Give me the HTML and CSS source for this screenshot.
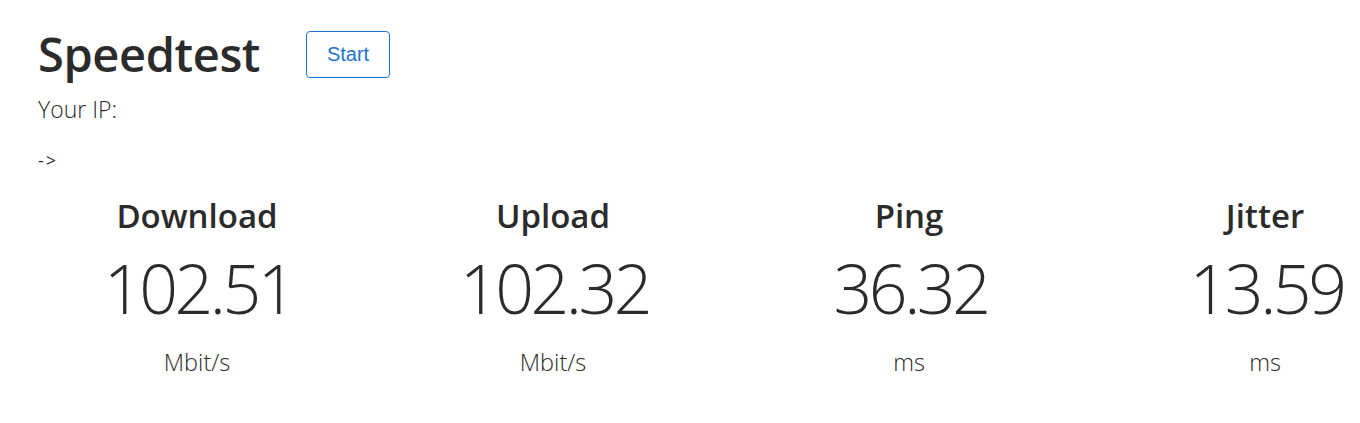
FILE: index.html
```html
<!DOCTYPE html>
<html>
<head>
<meta charset="utf-8">
<link rel="stylesheet" href="styles.css">
</head>
<body>
<div class="page">
  <div class="header">
    <h1 class="title">Speedtest</h1>
    <button class="start-btn">Start</button>
  </div>
  <div class="ip">Your IP: <span class="ip-val"></span></div>
  <div class="arrow">-&gt;</div>
  <div class="results">
    <div class="metric">
      <div class="metric-name">Download</div>
      <div class="metric-value">102.51</div>
      <div class="metric-unit">Mbit/s</div>
    </div>
    <div class="metric">
      <div class="metric-name">Upload</div>
      <div class="metric-value">102.32</div>
      <div class="metric-unit">Mbit/s</div>
    </div>
    <div class="metric">
      <div class="metric-name">Ping</div>
      <div class="metric-value">36.32</div>
      <div class="metric-unit">ms</div>
    </div>
    <div class="metric">
      <div class="metric-name">Jitter</div>
      <div class="metric-value">13.59</div>
      <div class="metric-unit">ms</div>
    </div>
  </div>
</div>
</body>
</html>
```

FILE: styles.css
```css
html, body {
  margin: 0;
  padding: 0;
  background: #fff;
  overflow: hidden;
}
body {
  font-family: "Open Sans", "Noto Sans", sans-serif;
  color: #2b2b2b;
}
.page {
  padding: 0 0 0 38px;
  overflow: hidden;
}
.header {
  display: flex;
  align-items: flex-start;
  padding-top: 31px;
}
.title {
  margin: -7px 0 0 0;
  font-size: 47px;
  font-weight: 600;
  line-height: 60px;
  letter-spacing: -0.4px;
}
.start-btn {
  margin-left: 46px;
  width: 84px;
  height: 47px;
  background: #fff;
  border: 1px solid #1c74d4;
  border-radius: 4px;
  color: #1c74d4;
  font-family: "Liberation Sans", Arial, sans-serif;
  font-size: 20px;
  padding: 0;
}
.ip {
  margin-top: 10px;
  font-size: 23px;
  font-weight: 300;
  line-height: 30px;
}
.arrow {
  margin-top: 24px;
  font-size: 18px;
  line-height: 24px;
  letter-spacing: 2px;
}
.results {
  display: grid;
  grid-template-columns: repeat(4, 356px);
  margin-left: -19px;
  margin-top: 22px;
}
.metric {
  display: flex;
  flex-direction: column;
  align-items: center;
}
.metric-name {
  font-size: 33px;
  font-weight: 600;
  line-height: 44px;
}
.metric-value {
  margin-top: 7px;
  font-size: 68px;
  font-weight: 300;
  line-height: 86px;
  letter-spacing: -3.5px;
  text-indent: 3px;
}
.metric-unit {
  margin-top: 16px;
  font-size: 23.5px;
  font-weight: 300;
  line-height: 30px;
}
```
